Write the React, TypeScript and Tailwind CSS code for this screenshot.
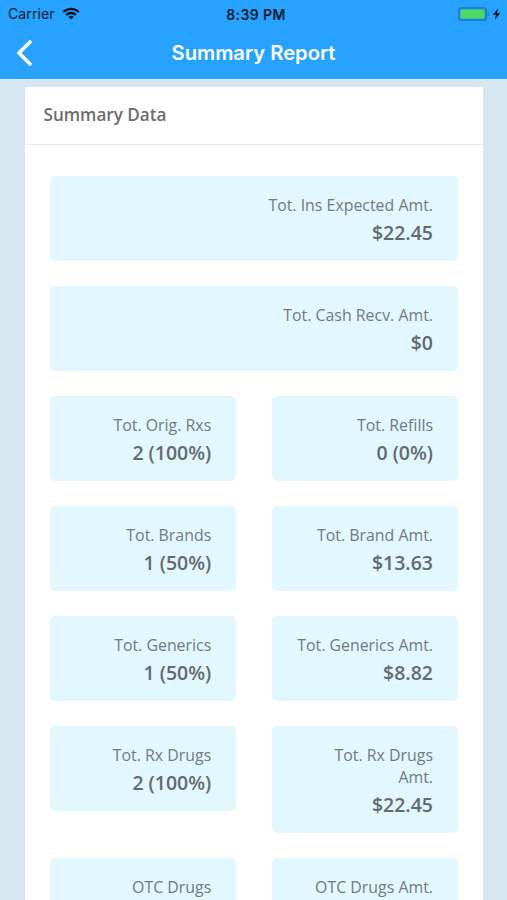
type Stat = { label: string; value: string; wide?: boolean };

const stats: Stat[] = [
  { label: 'Tot. Ins Expected Amt.', value: '$22.45', wide: true },
  { label: 'Tot. Cash Recv. Amt.', value: '$0', wide: true },
  { label: 'Tot. Orig. Rxs', value: '2 (100%)' },
  { label: 'Tot. Refills', value: '0 (0%)' },
  { label: 'Tot. Brands', value: '1 (50%)' },
  { label: 'Tot. Brand Amt.', value: '$13.63' },
  { label: 'Tot. Generics', value: '1 (50%)' },
  { label: 'Tot. Generics Amt.', value: '$8.82' },
  { label: 'Tot. Rx Drugs', value: '2 (100%)' },
  { label: 'Tot. Rx Drugs\nAmt.', value: '$22.45' },
];

// The last row runs past the bottom of the screen, so only its labels are in view.
const lastRow = ['OTC Drugs', 'OTC Drugs Amt.'];

const labelClass = 'text-[15.9px] leading-[22px] whitespace-pre text-[#707b7f]';

function StatCard({ label, value, wide }: Stat) {
  return (
    <div className={`rounded-[5px] bg-[#e3f7fe] pr-[24.5px] pl-5 pt-[18px] pb-[14px] text-right ${wide ? 'col-span-2' : ''}`}>
      <div className={labelClass}>{label}</div>
      <div className="mt-[3px] text-[19.5px] leading-[28px] font-semibold text-[#626b6e]">{value}</div>
    </div>
  );
}

function StatusBar() {
  return (
    <div className="grid h-[27px] grid-cols-3 items-center pr-[5px] pl-2 text-[#061c2e]">
      <div className="flex items-center gap-[7.5px]">
        <span className="pt-px text-[14.2px] leading-none">Carrier</span>
        <svg width="18" height="13" viewBox="0 0 18 13" fill="none" stroke="#03121f" strokeWidth="2.3">
          <path d="M1.2 5C5.6 0.7 12.4 0.7 16.8 5" />
          <path d="M4.1 8C6.9 5.3 11.1 5.3 13.9 8" />
          <path d="M9 12.5L6.4 9.8C7.8 8.5 10.2 8.5 11.6 9.8Z" fill="#03121f" stroke="none" />
        </svg>
      </div>
      <div className="pt-[3px] pl-[2px] text-center text-[14px] leading-none font-semibold tracking-[0.4px] whitespace-nowrap">8:39 PM</div>
      <svg className="justify-self-end" width="45" height="14" viewBox="0 0 45 14">
        <rect x="1.8" y="0.8" width="27.4" height="12.4" rx="2.5" fill="#219be9" stroke="#1774bf" strokeWidth="1.3" />
        <rect x="3.5" y="2.5" width="24" height="9" rx="1" fill="#4cd964" />
        <path d="M30.7 5C32.4 5.3 32.4 8.7 30.7 9Z" fill="#1774bf" />
        <path d="M41.2 1.5L35.8 7.7H39L37.8 12.7L43.2 6.2H40Z" fill="#03121f" />
      </svg>
    </div>
  );
}

export default function App() {
  return (
    <div className="flex h-[900px] w-[507px] flex-col overflow-hidden bg-[#d7e7f1] font-['Open_Sans','Noto_Sans',sans-serif]">
      <header className="h-[79px] shrink-0 bg-[#27a2ff] font-['Inter','Liberation_Sans',sans-serif]">
        <StatusBar />
        <div className="grid h-[51px] grid-cols-[60px_1fr_60px] items-center">
          <svg className="ml-[15px]" width="18" height="28" viewBox="0 0 18 28" fill="none" stroke="white" strokeWidth="3.6" strokeLinecap="round" strokeLinejoin="miter">
            <path d="M15 3L4 14L15 25" />
          </svg>
          <h1 className="pt-[2px] text-center text-[20.2px] leading-none font-semibold text-white">Summary Report</h1>
        </div>
      </header>
      <main className="mt-2 mr-[24.5px] ml-[25px] flex-1 bg-white">
        <h2 className="flex h-[58px] items-center border-b border-[#e6e9eb] pb-[1.5px] pl-[18.5px] text-[17.1px] font-semibold text-[#6b6d6f]">
          Summary Data
        </h2>
        <section className="grid grid-cols-2 items-start gap-x-9 gap-y-[25px] px-[25px] pt-[31px]">
          {stats.map((stat) => (
            <StatCard key={stat.label} {...stat} />
          ))}
          {lastRow.map((label) => (
            <div key={label} className="h-[85px] rounded-[5px] bg-[#e3f7fe] pt-[18px] pr-[24.5px] text-right">
              <div className={labelClass}>{label}</div>
            </div>
          ))}
        </section>
      </main>
    </div>
  );
}
